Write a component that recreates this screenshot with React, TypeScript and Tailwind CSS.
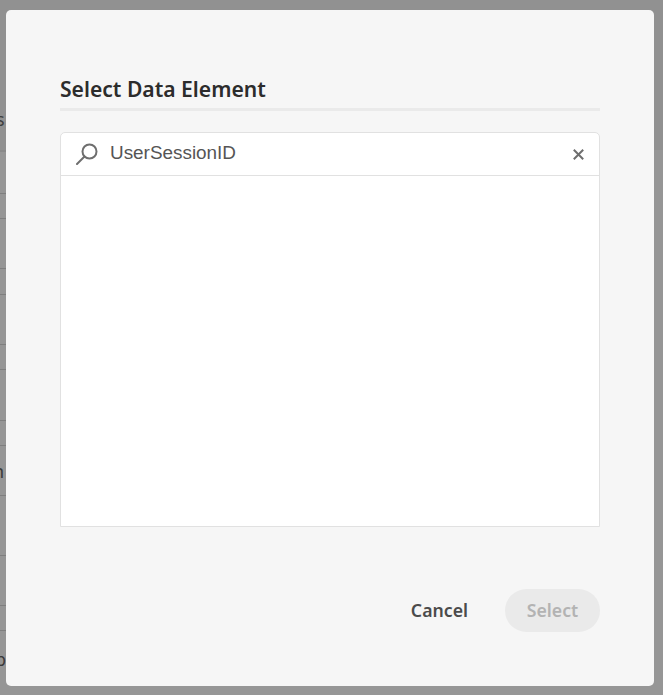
const rows = [
  { h: 42, t: "" },
  { h: 25, t: "" },
  { h: 50, t: "" },
  { h: 26, t: "" },
  { h: 50, t: "" },
  { h: 25, t: "" },
  { h: 51, t: "" },
  { h: 25, t: "" },
  { h: 50, t: "n" },
  { h: 60, t: "" },
  { h: 50, t: "" },
  { h: 25, t: "" },
];

export default function App() {
  return (
    <div className="relative h-[695px] w-[663px] overflow-hidden bg-[#969696] font-['Noto_Sans',sans-serif]">
      <div className="flex h-[150px] flex-col justify-end bg-[#919191] pb-[21px]">
        <span className="-ml-[4px] text-[18px] leading-[20px] text-[#3f3f3f]">s</span>
      </div>
      <div className="flex w-[300px] flex-col border-t-2 border-[#8a8a8a]">
        {rows.map((r, i) => (
          <div key={i} style={{ height: r.h }} className="flex items-center border-b border-[#7f7f7f] pt-[2px] text-[18px] text-[#3a3a3a]">
            <span className="-ml-[7px]">{r.t}</span>
          </div>
        ))}
        <div className="-ml-[5px] pt-[18px] text-[18px] leading-[20px] text-[#3a3a3a]">p</div>
      </div>

      <div className="absolute left-[6px] top-[10px] flex h-[676px] w-[648px] flex-col rounded-[5px] bg-[#f6f6f6] px-[54px] pt-[62px]">
        <h2 className="text-[21.1px] font-semibold leading-[33px] text-[#2c2c2c]">Select Data Element</h2>
        <div className="mt-[3px] h-[3px] bg-[#eaeaea]" />
        <div className="mt-[21px] flex h-[395px] flex-col rounded-t-[5px] border border-[#e1e1e1] bg-white">
          <div className="flex h-[43px] items-center border-b border-[#e1e1e1] pl-[15px] pr-[15px]">
            <svg width="22" height="22" viewBox="0 0 22 22" fill="none" stroke="#6e6e6e" strokeWidth="2" className="shrink-0">
              <circle cx="13.5" cy="8.5" r="7" />
              <path d="M8.5 13.5L1 21" strokeLinecap="round" />
            </svg>
            <span className="ml-[12px] flex-1 pb-[2px] font-['Liberation_Sans',sans-serif] text-[18.9px] leading-[24px] text-[#555555]">UserSessionID</span>
            <svg width="11" height="11" viewBox="0 0 11 11" stroke="#6e6e6e" strokeWidth="2" className="shrink-0">
              <path d="M0.8 0.8L10.2 10.2M10.2 0.8L0.8 10.2" />
            </svg>
          </div>
        </div>
        <div className="mt-[62px] flex items-center justify-end">
          <span className="text-[17.7px] font-semibold leading-[43px] text-[#4b4b4b]">Cancel</span>
          <div className="ml-[37px] flex h-[43px] w-[95px] items-center justify-center rounded-full bg-[#eaeaea] text-[17.7px] font-semibold text-[#b3b3b3]">Select</div>
        </div>
      </div>
    </div>
  );
}
